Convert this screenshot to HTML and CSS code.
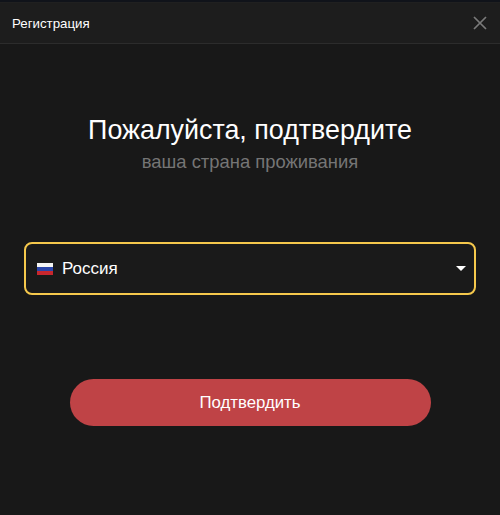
FILE: index.html
```html
<!DOCTYPE html>
<html lang="ru">
<head>
<meta charset="utf-8">
<title>Регистрация</title>
<link rel="stylesheet" href="styles.css">
</head>
<body>
<div class="modal">
  <header class="head">
    <span class="head-title">Регистрация</span>
    <svg class="close" width="14" height="14" viewBox="0 0 14 14"><path d="M1 1L13 13M13 1L1 13" stroke="#7a7a7a" stroke-width="1.7" fill="none"/></svg>
  </header>
  <main class="body">
    <h1 class="title">Пожалуйста, подтвердите</h1>
    <p class="sub">ваша страна проживания</p>
    <div class="select">
      <svg class="flag" width="16" height="12" viewBox="0 0 16 12"><rect width="16" height="4" fill="#f4f4f4"/><rect y="4" width="16" height="4" fill="#2a45a8"/><rect y="8" width="16" height="4" fill="#c8272e"/></svg>
      <span class="country">Россия</span>
      <span class="caret"></span>
    </div>
    <button class="btn">Подтвердить</button>
  </main>
</div>
</body>
</html>
```
FILE: styles.css
```css
* { box-sizing: border-box; }
html, body { margin: 0; padding: 0; }
body {
  width: 500px;
  height: 515px;
  background: #181818;
  font-family: "Liberation Sans", Arial, sans-serif;
  overflow: hidden;
}
.modal { display: flex; flex-direction: column; height: 515px; }
.head {
  height: 42px;
  margin-top: 2px;
  padding: 0 13px 0 12px;
  display: flex;
  align-items: center;
  justify-content: space-between;
  background: #1d1d1d;
  border-top: 1px solid #202020;
  border-bottom: 1px solid #2c2c2c;
  box-shadow: 0 -2px 0 #10131a;
}
.head-title { color: #fff; font-size: 13.3px; }
.body { display: flex; flex-direction: column; align-items: center; }
.title {
  margin: 70px 0 0;
  font-weight: 400;
  font-size: 26.85px;
  line-height: 32px;
  color: #fff;
  text-align: center;
}
.sub {
  margin: 5px 0 0;
  font-size: 18.4px;
  line-height: 22px;
  color: #757575;
  text-align: center;
}
.select {
  margin-top: 69px;
  width: 452px;
  height: 53px;
  border: 2px solid #f5c84c;
  border-radius: 8px;
  background: #1a1a1a;
  display: flex;
  align-items: center;
  padding: 0 8px 0 11px;
}
.flag { margin-right: 9px; }
.country { color: #fff; font-size: 17px; flex: 1; }
.caret {
  width: 0; height: 0;
  border-left: 5px solid transparent;
  border-right: 5px solid transparent;
  border-top: 5px solid #fff;
}
.btn {
  margin-top: 84px;
  width: 361px;
  height: 47px;
  border: 0;
  border-radius: 24px;
  background: #bf4346;
  color: #fff;
  font-family: inherit;
  font-size: 16.8px;
}
```
